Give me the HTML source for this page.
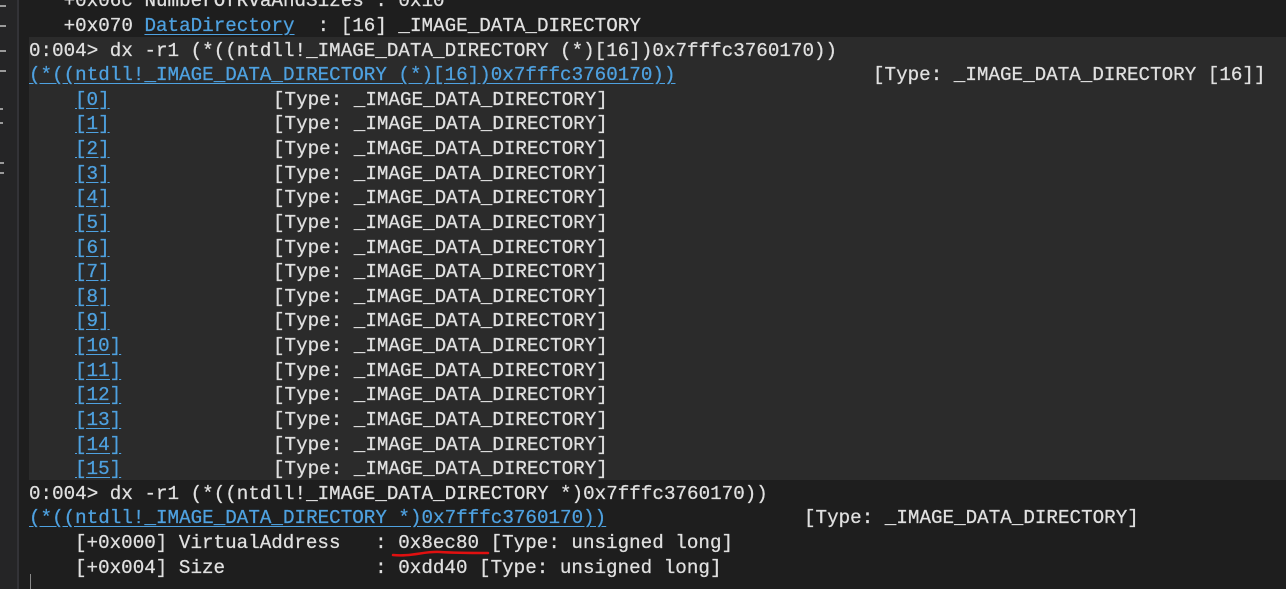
<!DOCTYPE html>
<html><head><meta charset="utf-8"><style>
html,body{margin:0;padding:0;width:1286px;height:589px;overflow:hidden;background:#1e1e1e;}
.g{position:absolute;left:0;top:0;width:17px;height:589px;background:#252526;}
.gb{position:absolute;left:17px;top:0;width:2px;height:589px;background:#333337;}
.hl{position:absolute;left:29px;top:37px;width:1257px;height:443px;background:#2b2b2b;}
.t{position:absolute;font-family:"Liberation Mono",monospace;font-size:19.2px;line-height:24px;color:#e0e0e0;white-space:pre;letter-spacing:0.03px;-webkit-text-stroke:0.25px #e0e0e0;}
.l{color:#4ea1e0;text-decoration:underline;text-underline-offset:3px;-webkit-text-stroke:0.25px #4ea1e0;}
.gm{position:absolute;left:0;width:6px;height:2px;background:#9a9a9a;}
</style></head><body>
<div class="g"></div><div class="gb"></div>
<div class="hl"></div>
<div class="gm" style="top:5px"></div>
<div class="gm" style="top:25px"></div>
<div class="gm" style="top:50px"></div>
<div class="gm" style="top:70px"></div>
<div class="gm" style="top:108px;width:3px"></div>
<div class="gm" style="top:122px;width:3px"></div>
<div class="gm" style="top:162px;width:4px"></div>
<div class="gm" style="top:172px;width:4px"></div>
<div style="position:absolute;left:30px;top:574px;width:1px;height:15px;background:#888"></div>
<div id="c"></div>
<script>
var lines=[
 [[29,"   +0x06c NumberOfRvaAndSizes : 0x10"]],
 [[29,"   +0x070 "],[0,"DataDirectory",1],[0,"  : [16] _IMAGE_DATA_DIRECTORY"]],
 [[29,"0:004> dx -r1 (*((ntdll!_IMAGE_DATA_DIRECTORY (*)[16])0x7fffc3760170))"]],
 [[29,"(*((ntdll!_IMAGE_DATA_DIRECTORY (*)[16])0x7fffc3760170))",1],[873,"[Type: _IMAGE_DATA_DIRECTORY [16]]"]]
];
for(var i=0;i<16;i++)lines.push([[75,"["+i+"]",1],[273,"[Type: _IMAGE_DATA_DIRECTORY]"]]);
lines.push([[29,"0:004> dx -r1 (*((ntdll!_IMAGE_DATA_DIRECTORY *)0x7fffc3760170))"]]);
lines.push([[29,"(*((ntdll!_IMAGE_DATA_DIRECTORY *)0x7fffc3760170))",1],[804,"[Type: _IMAGE_DATA_DIRECTORY]"]]);
lines.push([[75,"[+0x000] VirtualAddress   : 0x8ec80 [Type: unsigned long]"]]);
lines.push([[75,"[+0x004] Size             : 0xdd40 [Type: unsigned long]"]]);
var h="";
for(var i=0;i<lines.length;i++){
 var y=25+(i-1)*24.62-11;
 var segs=lines[i];
 if(segs.length>1&&segs[1][0]===0){
  var s="";for(var j=0;j<segs.length;j++){s+=segs[j][2]?'<span class="l">'+segs[j][1]+'</span>':segs[j][1];}
  h+='<div class="t" style="left:'+segs[0][0]+'px;top:'+y+'px">'+s+'</div>';
 } else {
  for(var j=0;j<segs.length;j++){
   var sg=segs[j];
   h+='<div class="t" style="left:'+sg[0]+'px;top:'+y+'px">'+(sg[2]?'<span class="l">'+sg[1]+'</span>':sg[1])+'</div>';
  }
 }
}
document.getElementById("c").innerHTML=h;
</script>
<svg style="position:absolute;left:390px;top:548px" width="102" height="12"><path d="M3 7 C20 9,35 3,50 4 S85 5,98 5" stroke="#e01010" stroke-width="2.5" fill="none" stroke-linecap="round"/></svg>
</body></html>
